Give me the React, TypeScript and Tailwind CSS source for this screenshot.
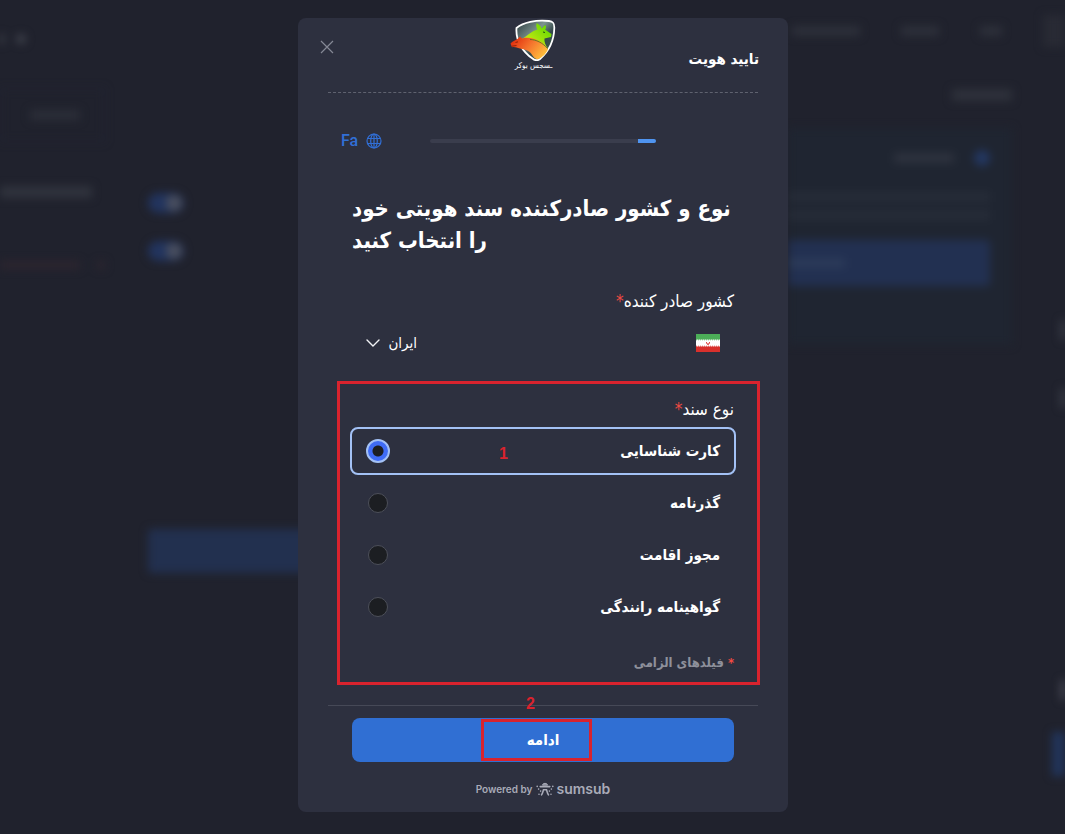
import { useState } from 'react';

type DocumentType = {
  id: string;
  label: string;
};

const documentTypes: DocumentType[] = [
  { id: 'id-card', label: 'کارت شناسایی' },
  { id: 'passport', label: 'گذرنامه' },
  { id: 'residence', label: 'مجوز اقامت' },
  { id: 'driving', label: 'گواهینامه رانندگی' },
];

function BrandLogo() {
  return (
    <svg viewBox="0 0 48 42" className="h-[42px] w-12" aria-hidden="true">
      <defs>
        <linearGradient id="shield" x1="0" y1="0" x2="1" y2="1">
          <stop offset="0" stopColor="#2c3b40" />
          <stop offset="0.4" stopColor="#7d9490" />
          <stop offset="0.6" stopColor="#34474a" />
          <stop offset="1" stopColor="#3f6a4c" />
        </linearGradient>
        <linearGradient id="bear" x1="0" y1="0.2" x2="1" y2="0.7">
          <stop offset="0" stopColor="#e02a0c" />
          <stop offset="0.5" stopColor="#f5762e" />
          <stop offset="1" stopColor="#ffc43d" />
        </linearGradient>
        <linearGradient id="bull" x1="0" y1="1" x2="1" y2="0">
          <stop offset="0" stopColor="#f2c81c" />
          <stop offset="0.35" stopColor="#b6e60e" />
          <stop offset="1" stopColor="#52d500" />
        </linearGradient>
      </defs>
      <path
        d="M6.500 9C13 3.500 26 0.500 39 2C43 2.500 44.500 4 44.300 9C44 23 38 33 30 40C27.500 42 25 41.500 22.500 39.500C13 33 5.500 22 6.500 9Z"
        fill="url(#shield)"
        stroke="#fff"
        strokeWidth="1.800"
      />
      <path
        d="M12 20C16 18 18 15 22 13C24 11.500 26 11 27.500 10.500C26 8.500 26 6 26.800 4C29 5.500 31 7 31.500 9.500C33 9 33.500 6.500 35.500 6C36.500 8 35.800 9.500 35.200 10.800L41.500 15L41 18L34.500 19.500C34 23 35.500 26 38 30C31 23 21 20 12 20Z"
        fill="url(#bull)"
      />
      <path
        d="M0.500 24.500C2.500 22 5 21.500 7.500 20L10 17.500L12 19.500C16 17.500 26 19 32 23.500C35 26 37 28 38 30C36.500 34.500 32 38.500 28.500 40C26 41 23.500 38.500 21.500 35C19 31.500 15 30.500 10 29.500C6.500 29 5.500 27.500 2 28.200Z"
        fill="url(#bear)"
      />
      <path d="M20 20.500C26 20.500 33 24 37.500 29.500" stroke="#3f7a1a" strokeWidth="0.800" fill="none" />
      <path d="M33 13L35 13.500" stroke="#1d5312" strokeWidth="1" />
      <path d="M5.500 23.500L8 22.800M2 27.200L6.500 26.500" stroke="#7c1604" strokeWidth="0.800" />
    </svg>
  );
}

function CloseIcon() {
  return (
    <svg viewBox="0 0 14 14" className="size-3.5" fill="none" stroke="#858895" strokeWidth="1.200">
      <path d="M1 1L13 13M13 1L1 13" />
    </svg>
  );
}

function GlobeIcon() {
  return (
    <svg viewBox="0 0 16 16" className="size-4" fill="none" stroke="currentColor" strokeWidth="1.200">
      <circle cx="8" cy="8" r="7" />
      <ellipse cx="8" cy="8" rx="3.300" ry="7" />
      <path d="M1.500 5.500H14.500M1.500 10.500H14.500M8 1V15" />
    </svg>
  );
}

function IranFlag() {
  return (
    <svg viewBox="0 0 24 18" className="h-[18px] w-6" role="img" aria-label="ایران">
      <rect width="24" height="18" fill="#fff" />
      <rect width="24" height="5.500" fill="#4cae58" />
      <rect y="12.500" width="24" height="5.500" fill="#d8302c" />
      <path d="M0 5.800H24" stroke="#4cae58" strokeWidth="0.800" strokeDasharray="1 1" />
      <path d="M0 12.200H24" stroke="#d8302c" strokeWidth="0.800" strokeDasharray="1 1" />
      <path d="M10.500 8C10.500 9.500 11 10.300 12 10.600C13 10.300 13.500 9.500 13.500 8M12 9V10.500" stroke="#d8302c" strokeWidth="0.900" fill="none" />
    </svg>
  );
}

function ChevronDown() {
  return (
    <svg viewBox="0 0 14 8" className="pointer-events-none h-2 w-3.5" fill="none" stroke="#f2f3f6" strokeWidth="1.400" strokeLinecap="round">
      <path d="M1 1L7 7L13 1" />
    </svg>
  );
}

function SumsubMark() {
  return (
    <svg viewBox="0 0 18 14" className="h-3.5 w-[18px]" fill="none" stroke="#a9abb8" strokeWidth="1.600" strokeLinecap="round">
      <path d="M6.500 2.800C7 0.800 11 0.800 11.500 2.800Z" fill="#a9abb8" strokeWidth="1" />
      <path d="M4.200 4.600H13.800" />
      <path d="M5.500 12.800C6.500 12 7 9.500 7.500 7.800H10.500C11 9.500 11.500 12 12.500 12.800" />
      <path d="M1.200 4.300V4.400M2.600 7V7.100M4.600 9V9.100M3 12.200V12.300M16.800 4.300V4.400M15.400 7V7.100M13.400 9V9.100M15 12.200V12.300" />
    </svg>
  );
}

function Toggle() {
  return (
    <div className="flex h-5 w-9 justify-end rounded-full bg-[#22345e] p-0.5">
      <div className="size-4 rounded-full bg-[#4a4f5e]" />
    </div>
  );
}

// Account page that stays behind the dialog
function PageBehind() {
  return (
    <div className="absolute inset-0 flex justify-between overflow-hidden blur-[4px]" aria-hidden="true">
      <div className="flex w-[298px] shrink-0">
        <div className="w-[105px] shrink-0 pt-[34px]">
          <div className="flex gap-3">
            <div className="h-2.5 w-1 bg-[#3e414b]" />
            <div className="size-2.5 rounded-full bg-[#3e414b]" />
          </div>
          <div className="mt-11 flex h-[54px] items-center justify-end border border-[#232638] pr-6">
            <div className="h-2.5 w-[50px] bg-[#2b2e38]" />
          </div>
          <div className="mt-11 h-3 w-[92px] bg-[#30333d]" />
          <div className="mt-[63px] flex justify-between">
            <div className="h-2 w-20 bg-[#2d252f]" />
            <div className="h-2 w-2 bg-[#2d252f]" />
          </div>
        </div>
        <div className="ml-[43px] flex shrink-0 flex-col pt-[193px]">
          <Toggle />
          <div className="mt-7">
            <Toggle />
          </div>
          <div className="mt-[268px] h-11 w-[170px] rounded bg-[#22304f]" />
        </div>
      </div>

      <div className="w-[277px] shrink-0">
        <div className="flex h-[62px] items-center justify-between pl-1">
          <div className="h-2.5 w-[68px] bg-[#2d303a]" />
          <div className="h-2.5 w-[38px] bg-[#2d303a]" />
          <div className="h-2.5 w-[22px] bg-[#2d303a]" />
          <div className="h-8 w-[22px] bg-[#282a34]" />
        </div>
        <div className="flex">
          <div className="w-[224px]">
            <div className="flex h-[66px] items-center justify-end">
              <div className="h-3 w-[60px] bg-[#2e313b]" />
            </div>
            <div className="h-[217px] bg-[#1f2531] pr-[22px] pt-[22px]">
              <div className="flex items-center justify-end gap-5">
                <div className="h-2.5 w-[60px] bg-[#2d323e]" />
                <div className="size-4 rounded-full bg-[#233761]" />
              </div>
              <div className="mt-[26px] h-2.5 bg-[#262c38]" />
              <div className="mt-2 h-2.5 bg-[#262c38]" />
              <div className="mt-5 flex h-[46px] items-center rounded bg-[#223051]">
                <div className="h-2.5 w-[57px] bg-[#2b3a59]" />
              </div>
            </div>
          </div>
          <div className="flex flex-1 flex-col items-end pt-[258px]">
            <div className="h-5 w-1 bg-[#41444e]" />
            <div className="mt-12 h-5 w-1 bg-[#41444e]" />
            <div className="mt-[272px] h-5 w-1 bg-[#50535d]" />
            <div className="mt-[32px] h-11 w-[13px] bg-[#21345a]" />
          </div>
        </div>
      </div>
    </div>
  );
}

export default function App() {
  const [country, setCountry] = useState('ir');
  const [documentType, setDocumentType] = useState('id-card');

  return (
    <div
      dir="rtl"
      lang="fa"
      className="relative flex min-h-screen items-start justify-center overflow-hidden bg-[#20222d] py-[18px] pl-[21px] font-['DejaVu_Sans_Condensed','DejaVu_Sans',sans-serif] text-white"
    >
      <div dir="ltr">
        <PageBehind />
      </div>

      <div role="dialog" aria-labelledby="dialog-title" className="relative w-full max-w-[490px] rounded-lg bg-[#2d303f]">
        <header className="grid h-[74px] grid-cols-[1fr_auto_1fr] items-start pl-2.5 pr-[29px]">
          <h1 id="dialog-title" className="pt-[29px] text-[15px] leading-6 font-bold">
            تایید هویت
          </h1>
          <div className="flex flex-col items-center pt-px">
            <BrandLogo />
            <span className="text-[8px] leading-[10px]">ـسجس بوکر</span>
          </div>
          <button type="button" aria-label="بستن" className="mt-2.5 flex size-[38px] items-center justify-center justify-self-end">
            <CloseIcon />
          </button>
        </header>
        <hr className="mx-[30px] border-t border-dashed border-[#5f626f]" />

        <div className="mt-9 grid grid-cols-[1fr_minmax(0,226px)_1fr] items-center px-[43px]">
          <span />
          <div className="h-1 overflow-hidden rounded-full bg-[#3a3d4d]">
            <div className="h-full w-[8%] bg-[#4f94f0]" />
          </div>
          <button
            type="button"
            className="flex items-center gap-2 justify-self-end font-['Roboto',sans-serif] text-base leading-6 font-medium text-[#316fd6]"
          >
            <GlobeIcon />
            Fa
          </button>
        </div>

        <form onSubmit={(e) => e.preventDefault()}>
          <div className="px-[54px] pt-10">
            <h2 className="text-left text-[22px] leading-8 font-bold">نوع و کشور صادرکننده سند هویتی خود را انتخاب کنید</h2>

            <label htmlFor="country" className="mt-8 block text-[17px] leading-6">
              کشور صادر کننده<span className="text-[#ef4a42]">*</span>
            </label>
            <div className="mt-1.5 flex h-12 items-center px-3.5">
              <IranFlag />
              <select
                id="country"
                value={country}
                onChange={(e) => setCountry(e.target.value)}
                className="ms-auto me-2 appearance-none bg-transparent text-[15px] leading-6 outline-none"
              >
                <option value="ir">ایران</option>
              </select>
              <ChevronDown />
            </div>
          </div>

          <fieldset className="relative mt-3.5 mr-7 ml-[39px] border-[3px] border-[#d9232e] pt-3 pr-[21px] pb-[7px] pl-2.5">
            <legend className="float-right mb-1 w-full px-0.5 text-[17px] leading-[27px]">
              نوع سند<span className="text-[#ef4a42]">*</span>
            </legend>
            <div className="clear-both flex flex-col gap-1">
              {documentTypes.map((doc) => (
                <label
                  key={doc.id}
                  className="flex h-12 items-center justify-between rounded-lg border-2 border-transparent px-3.5 text-[15px] font-bold has-checked:border-[#a3c1f5]"
                >
                  {doc.label}
                  <span className="flex size-6 items-center justify-center">
                    <input
                      type="radio"
                      name="document-type"
                      value={doc.id}
                      checked={documentType === doc.id}
                      onChange={() => setDocumentType(doc.id)}
                      className="size-5 appearance-none rounded-full border border-[#4c4f59] bg-[#1c1e22] checked:size-6 checked:border-2 checked:border-[#a3c1f5] checked:bg-[radial-gradient(circle,#1c1e22_5px,#3f6cf5_6px)]"
                    />
                  </span>
                </label>
              ))}
            </div>
            <p className="mt-5 px-0.5 text-[13px] leading-6 font-bold text-[#8e909b]">
              <span className="text-[#ef4a42]">*</span> فیلدهای الزامی
            </p>
            <span className="absolute top-[58px] left-[159px] font-['Liberation_Sans',sans-serif] text-base leading-6 font-bold text-[#d9232e]">
              1
            </span>
          </fieldset>

          <div className="relative mx-[30px] mt-5 border-t border-[#464957] px-6 pt-3">
            <span className="absolute -top-3.5 left-[198px] font-['Liberation_Sans',sans-serif] text-base leading-6 font-bold text-[#d9232e]">
              2
            </span>
            <button type="submit" className="relative h-11 w-full rounded-lg bg-[#306fd3] text-[15px] leading-6 font-bold">
              ادامه
              <span className="absolute top-px left-[129px] h-[42px] w-[111px] border-[3px] border-[#d9232e]" />
            </button>
          </div>
        </form>

        <footer dir="ltr" className="flex h-[50px] items-center justify-center gap-1 pt-1 text-[#a9abb8]">
          <span className="font-['Inter',sans-serif] text-[10px] leading-4 font-semibold">Powered by</span>
          <span className="flex items-center gap-0.5">
            <SumsubMark />
            <span className="font-['Inter',sans-serif] text-sm leading-4 font-semibold">sumsub</span>
          </span>
        </footer>
      </div>
    </div>
  );
}
